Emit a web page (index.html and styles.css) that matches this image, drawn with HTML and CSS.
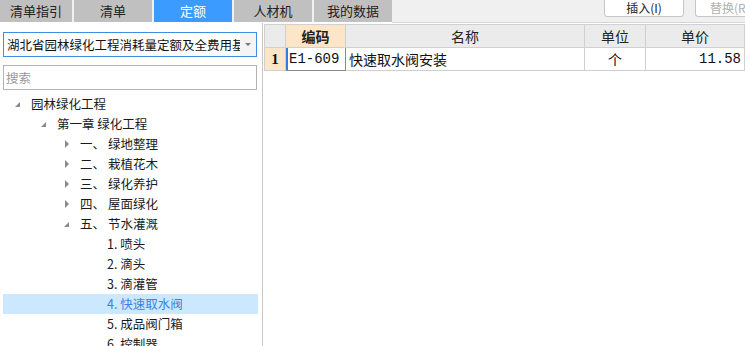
FILE: index.html
```html
<!DOCTYPE html>
<html lang="zh">
<head>
    <meta charset="UTF-8">
    <title>定额</title>
    <link rel="stylesheet" href="styles.css">
</head>
<body>

<div class="topbar">
    <div class="tabs">
        <div class="tab first">清单指引</div>
        <div class="tab">清单</div>
        <div class="tab active">定额</div>
        <div class="tab">人材机</div>
        <div class="tab">我的数据</div>
    </div>
    <div class="toolbar">
        <button class="tool-btn">插入(I)</button>
        <button class="tool-btn disabled">替换(R)</button>
    </div>
</div>

<div class="main">
    <div class="side">
        <div class="select">
            <span class="select-text">湖北省园林绿化工程消耗量定额及全费用基价表</span>
            <span class="select-arrow"></span>
        </div>
        <div class="search">搜索</div>

        <ul class="tree">
            <li class="node lv0"><span class="tw open"></span>园林绿化工程</li>
            <li class="node lv1"><span class="tw open"></span>第一章 绿化工程</li>
            <li class="node lv2"><span class="tw shut"></span><span class="num">一、</span>绿地整理</li>
            <li class="node lv2"><span class="tw shut"></span><span class="num">二、</span>栽植花木</li>
            <li class="node lv2"><span class="tw shut"></span><span class="num">三、</span>绿化养护</li>
            <li class="node lv2"><span class="tw shut"></span><span class="num">四、</span>屋面绿化</li>
            <li class="node lv2"><span class="tw open"></span><span class="num">五、</span>节水灌溉</li>
            <li class="node lv3">1. 喷头</li>
            <li class="node lv3">2. 滴头</li>
            <li class="node lv3">3. 滴灌管</li>
            <li class="node lv3 selected">4. 快速取水阀</li>
            <li class="node lv3">5. 成品阀门箱</li>
            <li class="node lv3">6. 控制器</li>
        </ul>
    </div>

    <div class="content">
        <table class="grid">
            <colgroup>
                <col class="c-idx">
                <col class="c-code">
                <col class="c-name">
                <col class="c-unit">
                <col class="c-price">
            </colgroup>
            <thead>
                <tr>
                    <th class="corner"></th>
                    <th class="hot">编码</th>
                    <th>名称</th>
                    <th>单位</th>
                    <th>单价</th>
                </tr>
            </thead>
            <tbody>
                <tr>
                    <td class="idx hot">1</td>
                    <td class="code editing">E1-609</td>
                    <td class="name">快速取水阀安装</td>
                    <td class="unit">个</td>
                    <td class="price">11.58</td>
                </tr>
            </tbody>
        </table>
    </div>
</div>

</body>
</html>
```

FILE: styles.css
```css
body {
    margin: 0;
    width: 745px;
    height: 346px;
    overflow: hidden;
    background-color: white;
    font-family: "Noto Sans CJK SC", "Noto Sans", sans-serif;
    font-size: 12px;
    color: #1a1a1a;
}
.topbar {
    display: flex;
    height: 23px;
    background-color: #f0f0f0;
}
.tabs {
    display: flex;
    gap: 2px;
    height: 22px;
    border-bottom: 1px solid white;
}
.tab {
    width: 78px;
    line-height: 22px;
    text-align: center;
    background-color: #c0c0c0;
    font-size: 13px;
    color: #222;
}
.tab.first {
    width: 72px;
}
.tab.active {
    background-color: #3c9bff;
    color: white;
}
.toolbar {
    flex: 1;
    display: flex;
    justify-content: flex-end;
    align-items: flex-start;
    gap: 11px;
    border-bottom: 1px solid #d4d4d4;
}
.tool-btn {
    height: 18px;
    width: 80px;
    padding: 0;
    margin-top: -1px;
    border: 1px solid #c6c6c6;
    border-radius: 0 0 3px 3px;
    background-color: white;
    font-family: "Noto Sans CJK SC", sans-serif;
    font-size: 12px;
    line-height: 16px;
    color: #222;
}
.tool-btn.disabled {
    width: 50px;
    border-right: none;
    border-radius: 0 0 0 3px;
    color: #b0b0b0;
    text-align: left;
    padding-left: 14px;
    overflow: hidden;
    white-space: nowrap;
}
.main {
    display: flex;
    height: 323px;
}
.side {
    width: 264px;
    border-right: 1px solid #c8c8c8;
    padding-top: 9px;
}
.select {
    display: flex;
    align-items: center;
    margin-left: 3px;
    width: 252px;
    height: 23px;
    border: 1px solid #3d8fe0;
    background-color: white;
}
.select-text {
    flex: 1;
    padding-left: 3px;
    font-size: 12.5px;
    white-space: nowrap;
    overflow: hidden;
    color: #111;
}
.select-arrow {
    width: 16px;
    height: 23px;
    background-color: #f4f4f4;
    position: relative;
}
.select-arrow::after {
    content: "";
    position: absolute;
    left: 5px;
    top: 10px;
    border-left: 3px solid transparent;
    border-right: 3px solid transparent;
    border-top: 3px solid #777;
}
.search {
    margin: 8px 0 0 3px;
    width: 250px;
    height: 23px;
    line-height: 23px;
    padding-left: 2px;
    border: 1px solid #b4b4b4;
    color: #999;
    font-size: 12.5px;
}
.tree {
    list-style: none;
    margin: 4px 0 0 3px;
    padding: 0;
    width: 255px;
}
.node {
    height: 20px;
    line-height: 20px;
    font-size: 12.5px;
    white-space: nowrap;
    display: flex;
    align-items: center;
}
.node.lv0 { padding-left: 11px; }
.node.lv1 { padding-left: 37px; }
.node.lv2 { padding-left: 60px; }
.node.lv3 { padding-left: 104px; }
.node.selected {
    background-color: #cce8ff;
    color: #3b82e0;
}
.tw {
    display: inline-block;
    width: 17px;
    height: 20px;
    position: relative;
}
.tw.open::after {
    content: "";
    position: absolute;
    left: 1px;
    top: 8px;
    border-left: 5px solid transparent;
    border-bottom: 5px solid #8a8a8a;
}
.tw.shut::after {
    content: "";
    position: absolute;
    left: 2px;
    top: 6px;
    border-top: 4px solid transparent;
    border-bottom: 4px solid transparent;
    border-left: 4px solid #8a8a8a;
}
.num {
    display: inline-block;
    width: 28px;
}
.content {
    flex: 1;
    padding-top: 1px;
    padding-left: 1px;
    background-color: white;
}
.grid {
    border-collapse: collapse;
    table-layout: fixed;
    width: 480px;
    font-family: "Noto Sans CJK SC", sans-serif;
}
.c-idx { width: 21px; }
.c-code { width: 60px; }
.c-name { width: 239px; }
.c-unit { width: 61px; }
.c-price { width: 99px; }
.grid th {
    height: 22px;
    padding: 0;
    background-color: #ebebeb;
    border: 1px solid #d0d0d0;
    font-weight: normal;
    font-size: 14px;
    color: #222;
}
.grid th.hot {
    background-color: #fde6c8;
    font-weight: bold;
}
.grid td {
    height: 22px;
    padding: 0 3px;
    border: 1px solid #d0d0d0;
    font-size: 14px;
    color: #111;
    white-space: nowrap;
}
.grid td.idx {
    text-align: center;
    padding: 0;
    font-family: "Liberation Serif", serif;
    font-size: 15px;
    font-weight: bold;
}
.grid td.hot {
    background-color: #fde6c8;
}
.grid td.editing {
    border: 1px solid #8a8a8a;
    box-shadow: inset 2px 0 0 #2f7fe0;
    font-family: "Liberation Mono", monospace;
    font-size: 14px;
    padding-left: 3px;
}
.grid td.unit {
    text-align: center;
}
.grid td.price {
    text-align: right;
    font-family: "Liberation Mono", monospace;
    padding-right: 3px;
}
```
